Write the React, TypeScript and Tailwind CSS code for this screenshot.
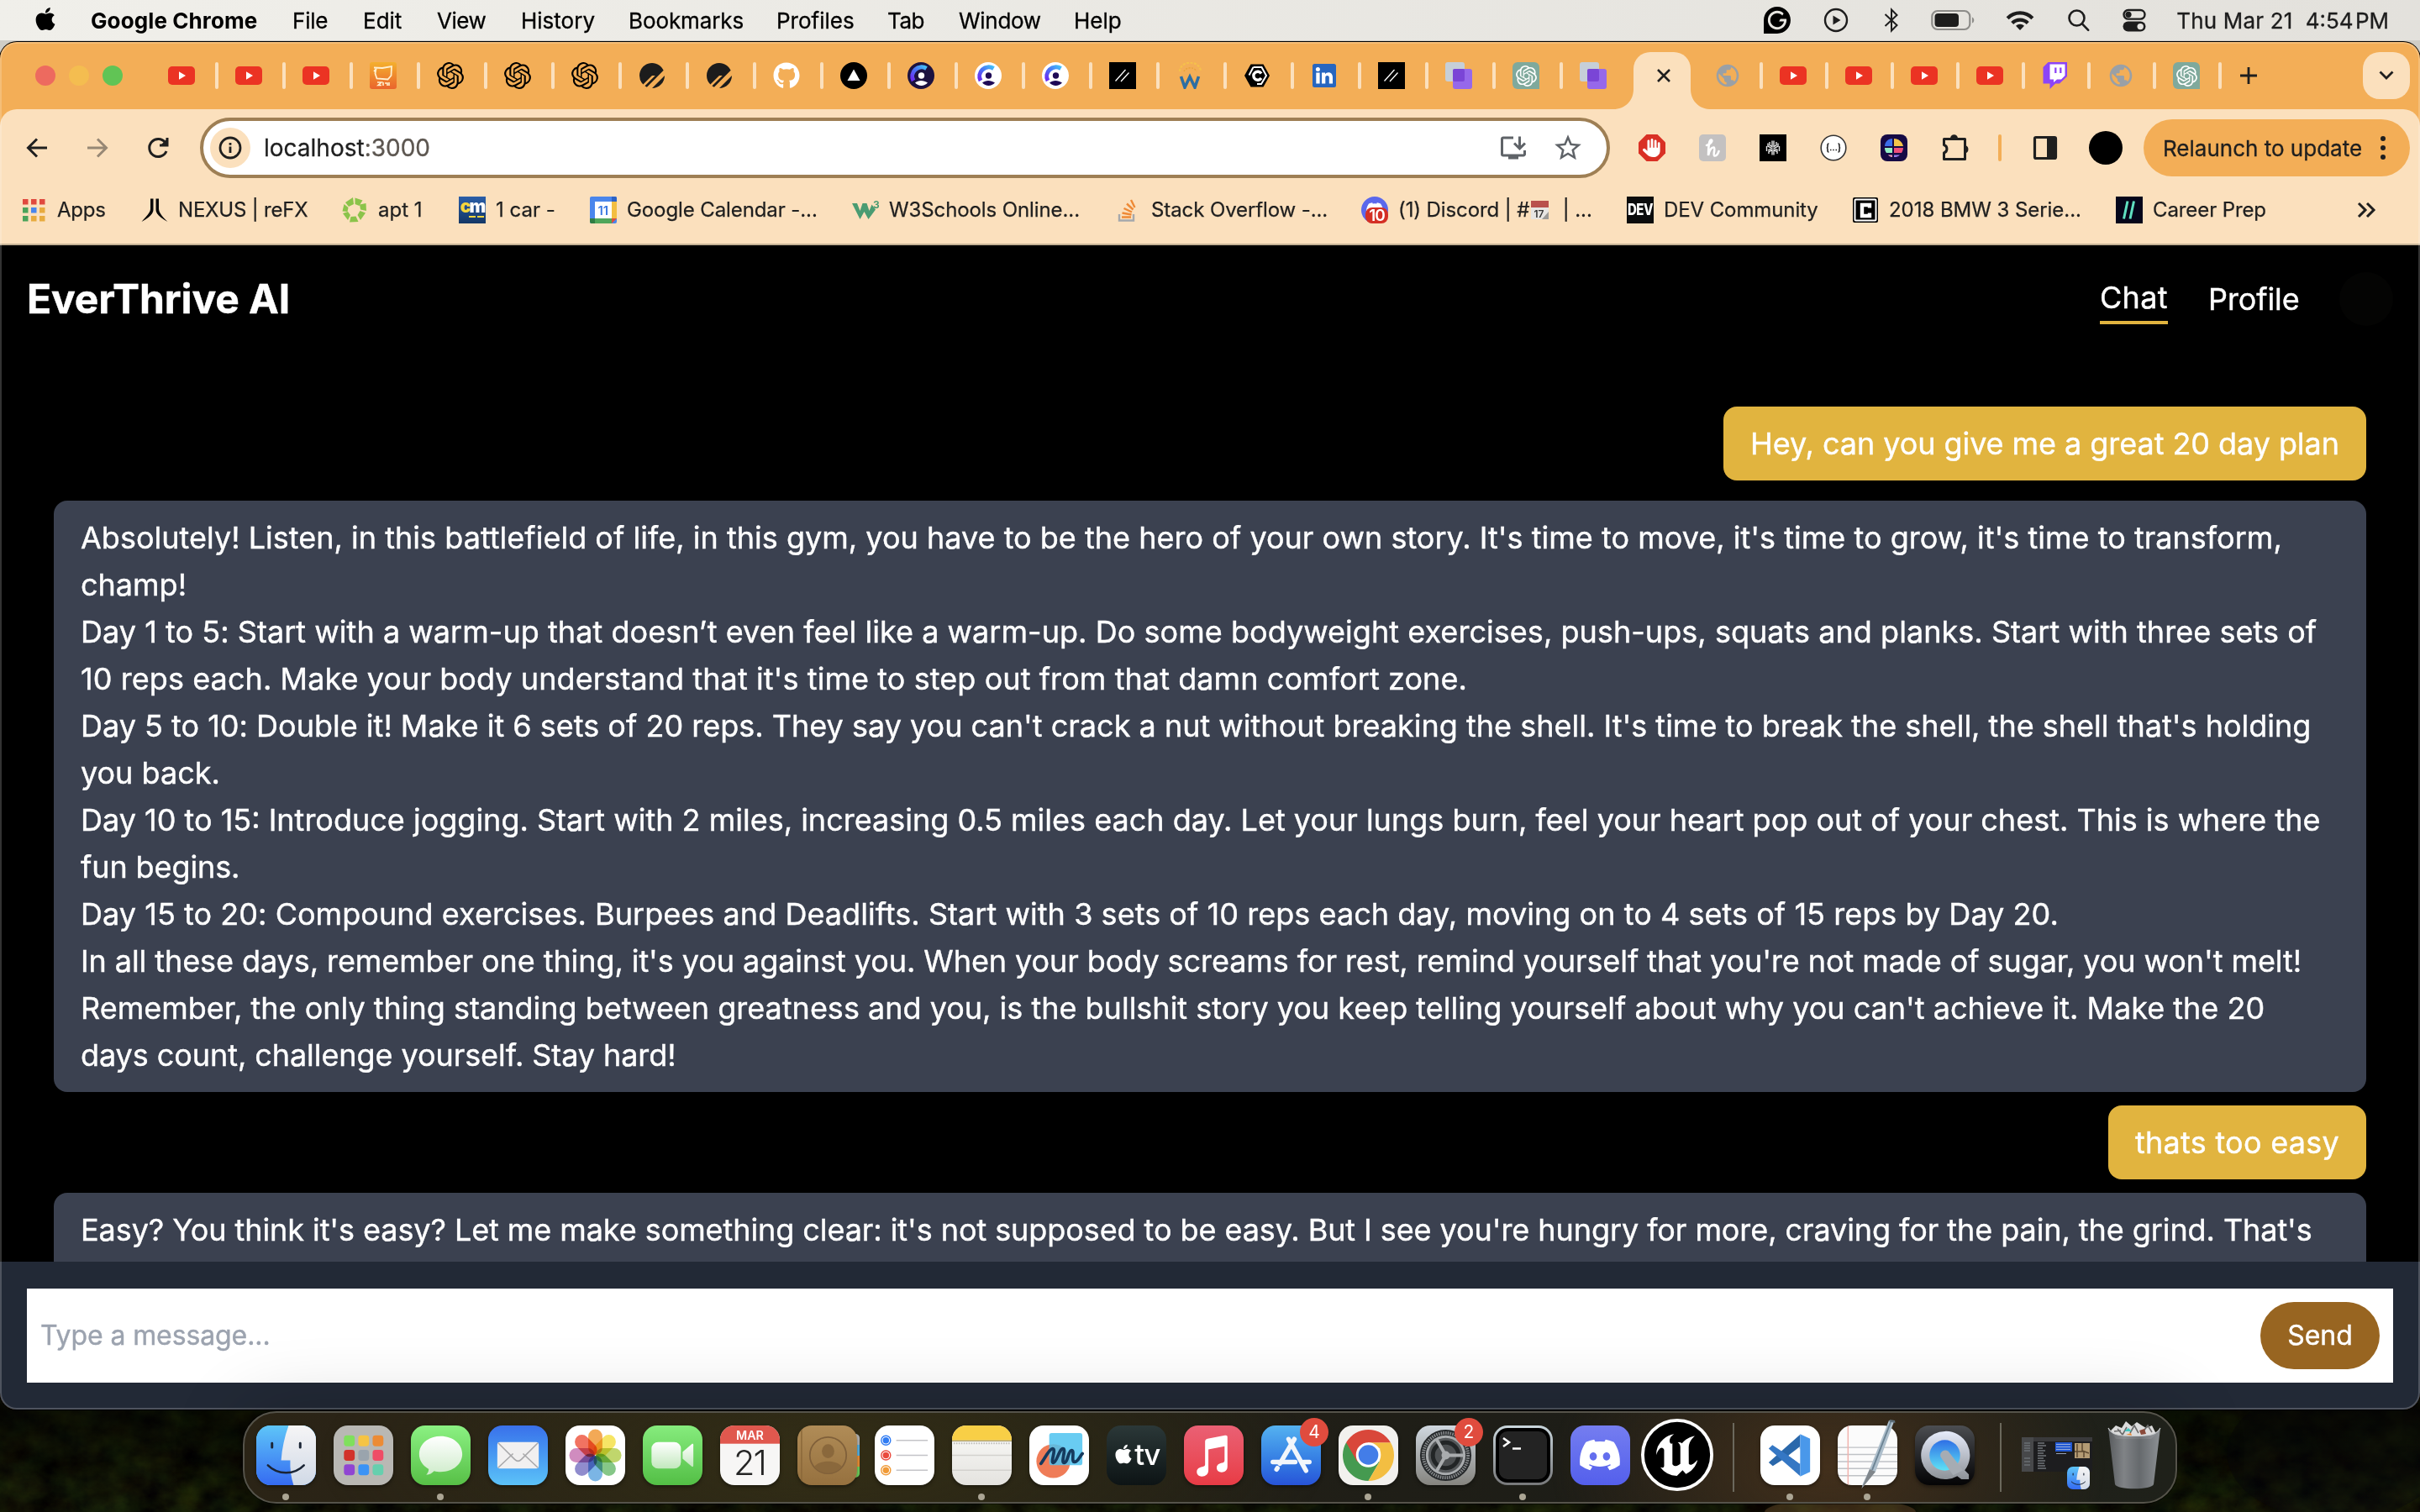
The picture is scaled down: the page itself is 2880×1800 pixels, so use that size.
import type { ReactNode } from 'react';
import { SiOpenai, SiUnrealengine, SiGrammarly, SiPlanetscale } from 'react-icons/si';
import { FaApple, FaGithub, FaHand, FaDiscord } from 'react-icons/fa6';
import { MdOutlineInstallDesktop, MdPublic, MdStarBorder } from 'react-icons/md';

/* ---------- menu bar ---------- */

const menus = [
  { label: 'File', cls: 'w-[84px] tracking-[-0.2px]' },
  { label: 'Edit', cls: 'w-[88px]' },
  { label: 'View', cls: 'w-[100px] tracking-[-0.5px]' },
  { label: 'History', cls: 'w-[128px]' },
  { label: 'Bookmarks', cls: 'w-[176px] tracking-[-0.1px]' },
  { label: 'Profiles', cls: 'w-[132px]' },
  { label: 'Tab', cls: 'w-[85px] tracking-[-0.5px]' },
  { label: 'Window', cls: 'w-[137px] tracking-[-0.3px]' },
  { label: 'Help', cls: 'w-[80px]' },
];

function MenuBar() {
  return (
    <header className="flex h-[48px] w-full shrink-0 items-center bg-linear-to-r from-[#f0efea] to-[#e3e1dc] text-[26px] text-black [-webkit-text-stroke:0.3px]">
      <FaApple className="ml-[38px] mb-[3px] h-[31px] w-[32px]" />
      <span className="ml-[38px] w-[240px] whitespace-nowrap font-bold tracking-[0.1px] [-webkit-text-stroke:0]">Google Chrome</span>
      {menus.map((m) => (
        <span key={m.label} className={`shrink-0 whitespace-nowrap ${m.cls}`}>{m.label}</span>
      ))}
      <div className="ml-auto flex items-center text-[#1d1d1d]">
        <SiGrammarly className="size-[32px] text-black" />
        <svg viewBox="0 0 30 30" className="ml-[39px] size-[30px]" fill="none" stroke="currentColor" strokeWidth="2.4">
          <circle cx="15" cy="15" r="13" />
          <path d="M11.5 9.5v11l9-5.5z" fill="currentColor" stroke="none" />
        </svg>
        <svg viewBox="0 0 20 30" className="ml-[41px] h-[30px] w-[20px]" fill="none" stroke="currentColor" strokeWidth="2">
          <path d="M2.5 8 L16.5 21 L10 27.5 V2.5 L16.5 9 L2.5 22" />
        </svg>
        <svg viewBox="0 0 54 26" className="ml-[37px] h-[26px] w-[54px]">
          <rect x="1.3" y="2" width="45" height="22" rx="6.5" fill="none" stroke="#8d8c89" strokeWidth="2.2" />
          <rect x="4.5" y="5" width="28.5" height="16" rx="4" fill="currentColor" />
          <path d="M49 9.5c3 1 3 6 0 7z" fill="#8d8c89" />
        </svg>
        <svg viewBox="0 0 36 28" className="ml-[34px] h-[26px] w-[36px]" fill="none" stroke="currentColor" strokeWidth="4.6">
          <path d="M2 11.5a22.5 22.5 0 0 1 32 0" />
          <path d="M8 17.8a14 14 0 0 1 20 0" />
          <path d="M18 27l-5.4-5.6a7.6 7.6 0 0 1 10.8 0z" fill="currentColor" stroke="none" />
        </svg>
        <svg viewBox="0 0 28 28" className="ml-[38px] size-[28px]" fill="none" stroke="currentColor" strokeWidth="2.6" strokeLinecap="round">
          <circle cx="11.5" cy="11.5" r="9" />
          <path d="M18.2 18.6l7 7.2" />
        </svg>
        <svg viewBox="0 0 28 28" className="ml-[38px] size-[28px]">
          <rect x="1.5" y="2" width="25" height="10.6" rx="5.3" fill="none" stroke="currentColor" strokeWidth="2.4" />
          <circle cx="7" cy="7.3" r="3.6" fill="currentColor" />
          <rect x="0.5" y="15.6" width="27" height="12" rx="6" fill="currentColor" />
          <circle cx="21.2" cy="21.6" r="3.7" fill="#e6e4e0" />
        </svg>
        <span className="ml-[36px] whitespace-pre tracking-[0.2px]">Thu Mar 21</span>
        <span className="ml-[15px] mr-[37px] whitespace-pre">4:54{'\u200A'}PM</span>
      </div>
    </header>
  );
}

/* ---------- favicons ---------- */

const YouTube = () => (
  <svg viewBox="0 0 32 32" className="size-8">
    <rect x="0" y="5" width="32" height="22" rx="5" fill="#eb3323" />
    <path d="M13 11.2v9.6l8-4.8z" fill="#fff" />
  </svg>
);
const Food = () => (
  <svg viewBox="0 0 32 32" className="size-8">
    <defs>
      <linearGradient id="food" x1="0" y1="0" x2="0" y2="1"><stop offset="0" stopColor="#f4b02e" /><stop offset="1" stopColor="#ea632c" /></linearGradient>
    </defs>
    <rect width="32" height="32" rx="3" fill="url(#food)" />
    <path d="M5 6.500l10 .5 11-2-.5 11-4 4.500-13-1-2-6 1-6M8 8l-3 3" fill="none" stroke="#fff0cf" strokeWidth="1.800" />
    <path d="M9 24h5l-4 3.500h4M16 24v4M18 25h3v3M23 24v4" fill="none" stroke="#fff0cf" strokeWidth="1.600" />
  </svg>
);
const OpenAi = () => <SiOpenai className="size-8 text-black" />;
const Planet = () => <SiPlanetscale className="size-[30px] text-[#1c1c1c]" />;
const GitHub = () => <FaGithub className="size-8 text-white" />;
const Vercel = () => (
  <svg viewBox="0 0 32 32" className="size-8"><circle cx="16" cy="16" r="16" fill="#000" /><path d="M16 8.500l7.500 13.500h-15z" fill="#fff" /></svg>
);
const Clerk = ({ dark = false }: { dark?: boolean }) => (
  <svg viewBox="0 0 32 32" className="size-8">
    <defs>
      <linearGradient id="clerk" x1="1" y1="0" x2="0.1" y2="1"><stop offset="0" stopColor="#43c0f7" /><stop offset=".5" stopColor="#4a72f5" /><stop offset="1" stopColor="#6c2cf2" /></linearGradient>
    </defs>
    <circle cx="16" cy="16" r="16" fill={dark ? '#1c1240' : '#fff'} />
    <path d="M22.500 7.500A11 11 0 0 0 7 22" fill="none" stroke="url(#clerk)" strokeWidth="5" />
    <circle cx="16.500" cy="16" r="3.700" fill={dark ? '#fff' : '#1f0a56'} />
    <path d="M9 24.500c4-3.500 10-3.500 15 0-4 4.500-11 4.500-15 0z" fill={dark ? '#fff' : '#1f0a56'} />
  </svg>
);
const Slashes = () => (
  <svg viewBox="0 0 32 32" className="size-8"><rect width="32" height="32" fill="#000" /><path d="M7.500 22.500L19.500 9M14 23l9.500-10.500" stroke="#fff" strokeWidth="1.300" /></svg>
);
const WArc = () => (
  <svg viewBox="0 0 32 32" className="size-8" fill="none">
    <path d="M4 11a12.500 10.500 0 0 1 25 0" stroke="#f5c14b" strokeWidth="2.200" strokeDasharray="3 1.500" />
    <path d="M9 11a8 6.500 0 0 1 15 0" stroke="#e8a33a" strokeWidth="1.500" strokeDasharray="2 1.500" />
    <path d="M5.500 17l4.500 13 6-12.500L22 30l4.500-13" stroke="#2d6ea3" strokeWidth="3.600" />
  </svg>
);
const HexC = () => (
  <svg viewBox="0 0 32 32" className="size-8">
    <path d="M8.500 2.500h15L31 16l-7.500 13.500h-15L1 16z" fill="#000" />
    <path d="M11.500 6h10l5.500 10-6 10h-5" fill="none" stroke="#fff" strokeWidth="2" />
    <path d="M21 13.500a5 5 0 1 0 0 5.500" fill="none" stroke="#fff" strokeWidth="3.400" />
    <path d="M11.500 6L6.500 15.500" stroke="#fff" strokeWidth="2" />
  </svg>
);
const LinkedIn = () => (
  <svg viewBox="0 0 32 32" className="size-8">
    <rect x="2" y="2" width="28" height="28" rx="2.500" fill="#2766c0" />
    <g fill="#fff"><circle cx="8.400" cy="8.500" r="2.500" /><rect x="6.300" y="12.500" width="4.300" height="13" />
      <path d="M13 12.500h4v1.800c2-3.300 9-3 9 3.700v7.500h-4.200v-7c0-3.200-4.500-3.200-4.500 0v7H13z" /></g>
  </svg>
);
const Squares = () => (
  <svg viewBox="0 0 32 32" className="size-8">
    <rect width="23" height="23" rx="3" fill="#c6cfd8" />
    <rect x="9" y="8" width="23" height="24" rx="3" fill="#9668ea" />
    <rect x="9" y="8" width="14" height="15" rx="2" fill="#7a45d6" />
  </svg>
);
const ChatGpt = () => (
  <span className="flex size-8 items-center justify-center rounded-l-md rounded-tr-md bg-[#7fa99c]"><SiOpenai className="size-[25px] text-white" /></span>
);
const Globe = () => <MdPublic className="size-[34px] text-[#9aa0a6]" />;
const Twitch = () => (
  <svg viewBox="0 0 32 32" className="size-8">
    <path d="M7.500 0H30v17L21 25.500h-5L9.500 32v-6.500H1.500V6z" fill="#8d44f7" />
    <path d="M9.500 2.500H27.500v13.500l-4.500 4.500h-5l-4 3.500v-3.500h-4.500z" fill="#fff" />
    <path d="M16.300 6.500v6.500M22.300 6.500v6.500" stroke="#8d44f7" strokeWidth="2.300" />
  </svg>
);

const leftTabs: ReactNode[] = [
  <YouTube />, <YouTube />, <YouTube />, <Food />, <OpenAi />, <OpenAi />, <OpenAi />, <Planet />, <Planet />, <GitHub />,
  <Vercel />, <Clerk dark />, <Clerk />, <Clerk />, <Slashes />, <WArc />, <HexC />, <LinkedIn />, <Slashes />, <Squares />, <ChatGpt />, <Squares />,
];
const rightTabs: ReactNode[] = [<Globe />, <YouTube />, <YouTube />, <YouTube />, <YouTube />, <Twitch />, <Globe />, <ChatGpt />];

function TabStrip() {
  return (
    <div className="flex h-[80px] shrink-0 items-center">
      <div className="ml-[42px] mr-[54px] flex gap-4">
        <span className="size-6 rounded-full bg-[#ed6a5f]" />
        <span className="size-6 rounded-full bg-[#f4bd50]" />
        <span className="size-6 rounded-full bg-[#61c455]" />
      </div>
      {leftTabs.map((icon, i) => (
        <div key={i} className={i === leftTabs.length - 1 ? 'flex w-[64px] shrink-0 items-center' : 'flex w-[80px] shrink-0 items-center'}>
          <span className="flex w-8 shrink-0 items-center justify-center">{icon}</span>
          {i < leftTabs.length - 1 && <span className="ml-6 h-8 w-1 rounded-full bg-[#fbe0bd]" />}
        </div>
      ))}
      <div className="relative mr-[28px] flex h-[68px] w-[68px] shrink-0 items-center justify-center self-end rounded-t-[20px] bg-[#fbe0bd]">
        <svg viewBox="0 0 24 24" className="absolute -left-6 bottom-0 size-6"><path d="M24 0v24H0C14 24 24 14 24 0z" fill="#fbe0bd" /></svg>
        <svg viewBox="0 0 24 24" className="absolute -right-6 bottom-0 size-6"><path d="M0 0v24h24C10 24 0 14 0 0z" fill="#fbe0bd" /></svg>
        <svg viewBox="0 0 16 16" className="mb-[12px] ml-[4px] size-4" stroke="#1f1f1f" strokeWidth="2.600"><path d="M1 1l14 14M15 1L1 15" /></svg>
      </div>
      {rightTabs.map((icon, i) => (
        <div key={i} className="flex w-[78px] shrink-0 items-center">
          <span className="flex w-8 shrink-0 items-center justify-center">{icon}</span>
          <span className="ml-[22px] h-8 w-1 rounded-full bg-[#fbe0bd]" />
        </div>
      ))}
      <svg viewBox="0 0 22 22" className="ml-[1px] size-[22px]" stroke="#1f1f1f" strokeWidth="2.800"><path d="M11 1v20M1 11h20" /></svg>
      <span className="ml-auto mr-[12px] flex size-[56px] items-center justify-center rounded-[20px] bg-[#fbe0bd]">
        <svg viewBox="0 0 18 12" className="h-[12px] w-[18px]" fill="none" stroke="#1f1f1f" strokeWidth="2.800"><path d="M1.500 1.500L9 9l7.500-7.500" /></svg>
      </span>
    </div>
  );
}

/* ---------- toolbar ---------- */

function Toolbar() {
  return (
    <div className="flex h-[92px] shrink-0 items-center text-[#1f1f1f] [-webkit-text-stroke:0.3px]">
      <svg viewBox="0 0 32 32" className="ml-[28px] size-8" fill="none" stroke="currentColor" strokeWidth="3"><path d="M28 16H6M16 5.500L5.500 16 16 26.500" /></svg>
      <svg viewBox="0 0 32 32" className="ml-[40px] size-8 opacity-45" fill="none" stroke="currentColor" strokeWidth="3"><path d="M4 16h22M16 5.500L26.500 16 16 26.500" /></svg>
      <svg viewBox="0 0 32 32" className="ml-[40px] size-8" fill="none" stroke="currentColor" strokeWidth="3">
        <path d="M26 20a10.500 10.500 0 1 1-1.500-10.500M27 4v9h-9" />
        <path d="M27 5v8h-8z" fill="currentColor" stroke="none" />
      </svg>
      <div className="ml-[34px] flex h-[72px] w-[1678px] shrink-0 items-center rounded-full border-4 border-[#9e7f54] bg-white pl-[8px] pr-[30px]">
        <span className="flex size-12 items-center justify-center rounded-full bg-[#fbe0bd]">
          <svg viewBox="0 0 28 28" className="size-7"><circle cx="14" cy="14" r="12" fill="none" stroke="#1f1f1f" strokeWidth="2.800" /><path d="M14 12.500v7.500M14 8v2.800" stroke="#1f1f1f" strokeWidth="2.800" /></svg>
        </span>
        <span className="ml-[16px] text-[28px]">localhost<span className="text-[#5c5650]">:3000</span></span>
        <MdOutlineInstallDesktop className="ml-auto size-[36px] text-[#5f6368]" />
        <MdStarBorder className="ml-[28px] -mr-[3px] size-[38px] text-[#5f6368]" />
      </div>
      <div className="ml-[34px] flex items-center gap-[40px]">
        <span className="relative flex size-8 items-center justify-center">
          <svg viewBox="0 0 32 32" className="absolute inset-0 size-8"><path d="M9.500 0h13L32 9.500v13L22.500 32h-13L0 22.500v-13z" fill="#d93025" /></svg>
          <FaHand className="relative size-[22px] text-white" />
        </span>
        <span className="flex size-8 items-center justify-center rounded-[5px] bg-[#c3c1c1]">
          <svg viewBox="0 0 32 32" className="size-8" fill="none" stroke="#fff" strokeWidth="2.600" strokeLinecap="round">
            <path d="M9 13c5-1 8-6 5.500-6.500S11 15 11 25c1-6 4-10 6.500-9.500S16 25 18.500 25.500 23 22 23.500 20" />
          </svg>
        </span>
        <svg viewBox="0 0 32 32" className="size-8">
          <rect width="32" height="32" fill="#000" />
          <g fill="none" stroke="#e6e6e6" strokeWidth="1.400">
            <path d="M15 7.500v7l-3-1.600V9M17 7.500v7l3-1.600V9M10 10.500v3.500l4.500 2.500L10 19M22 10.500v3.500l-4.500 2.500L22 19M8.500 14v6M23.500 14v6M15 24.500v-6l-4 2v2.500M17 24.500v-6l4 2v2.500" />
          </g>
        </svg>
        <svg viewBox="0 0 32 32" className="size-8">
          <circle cx="16" cy="16" r="14.800" fill="#fff" stroke="#333" strokeWidth="1.600" />
          <path d="M10.500 11c-3 0 0 4.500-2.500 5 2.500.5-.5 5 2.500 5M21.500 11c3 0 0 4.500 2.500 5-2.500.5.5 5-2.500 5" fill="none" stroke="#222" strokeWidth="1.600" />
          <path d="M12 18.500h1.500M15.200 18.500h1.500M18.500 18.500H20" stroke="#222" strokeWidth="1.600" />
        </svg>
        <svg viewBox="0 0 32 32" className="size-8">
          <rect width="32" height="32" rx="8" fill="#160a45" />
          <path d="M14 5v9H5c0-5 4-9 9-9z" fill="#3c6ee8" /><path d="M16 5c5.500 0 10 4 11 9H16z" fill="#f3c44a" />
          <path d="M5 16h9v6H7c-1.500-2-2-4-2-6z" fill="#95f0c4" /><path d="M16 16h11c0 2-.8 4-2 6h-9z" fill="#ee4e7b" />
          <path d="M9 24.500h5V27c-2 0-4-1-5-2.500z" fill="#f5a5c0" /><path d="M16 24.500h7c-2 2-4 2.500-7 2.500z" fill="#9a7bf0" />
        </svg>
        <svg viewBox="0 0 36 36" className="-mr-[4px] mb-[2px] size-9">
          <path d="M3.500 8.500h25v24h-25v-7.500a5 5 0 0 0 0-9.500z" fill="none" stroke="currentColor" strokeWidth="3" strokeLinejoin="round" />
          <path d="M11 8a4.500 4.800 0 0 1 9 0zM29 16a5 5 0 0 1 0 9.500z" fill="currentColor" />
        </svg>
      </div>
      <span className="ml-[36px] h-8 w-1 rounded-full bg-[#f3ae57]" />
      <svg viewBox="0 0 32 32" className="ml-[36px] size-8"><rect x="3.500" y="3.500" width="25" height="25" rx="1.500" fill="none" stroke="currentColor" strokeWidth="3.200" /><path d="M18 3h10v26H18z" fill="currentColor" /></svg>
      <span className="ml-[36px] size-10 shrink-0 rounded-full bg-black" />
      <div className="ml-[25px] flex h-[68px] w-[317px] shrink-0 items-center rounded-full bg-[#f3ae57] pl-[23px]">
        <span className="whitespace-nowrap text-[26px]">Relaunch to update</span>
        <span className="ml-[22px] flex flex-col gap-[5px]">
          <span className="size-[6px] rounded-full bg-[#1f1f1f]" /><span className="size-[6px] rounded-full bg-[#1f1f1f]" /><span className="size-[6px] rounded-full bg-[#1f1f1f]" />
        </span>
      </div>
    </div>
  );
}

/* ---------- bookmarks ---------- */

const AppsGrid = () => (
  <svg viewBox="0 0 32 32" className="size-8">
    {[['#e0493e', '#e0493e', '#e0493e'], ['#4aa35a', '#4a86ec', '#e8ab3e'], ['#4aa35a', '#e8ab3e', '#e8ab3e']].map((row, y) =>
      row.map((c, x) => <rect key={`${x}${y}`} x={3 + x * 10} y={3 + y * 10} width="6.500" height="6.500" fill={c} />))}
  </svg>
);
const Nexus = () => (
  <svg viewBox="0 0 32 32" className="size-8" fill="#0a0a0a"><path d="M11 2.500h3.500v13c0 5-5 9.500-14 14.500 5-6 10.500-10.500 10.500-15.500zM17.500 2.500H21v12c0 5 5 10 10.500 15.500-9-5-14-9.500-14-14.500z" /></svg>
);
const Apt = () => (
  <svg viewBox="0 0 32 32" className="size-8" fill="#8bc34a">
    <path d="M14 1l1 8-6 3-4-5z" /><path d="M16.500 1.500l9 3-4 6.500-5-2z" /><path d="M29.500 8L30 17l-7-1.500-1-6z" /><path d="M29 19.500L23 28l-3.500-6 3-5z" /><path d="M20.500 30l-10.500.5 1.500-6.500 6-.5z" /><path d="M8 28l-6-8 6-2 3 4z" /><path d="M1.500 17.500L3.500 9l5 4-1 5z" />
  </svg>
);
const Cm = () => (
  <span className="flex size-8 flex-col items-center bg-linear-to-b from-[#2a5ea8] to-[#143766] pt-[2px]">
    <span className="text-[21px] font-black leading-[20px] tracking-[-2px] text-white"><span className="text-[#f5d63d]">c</span>m</span>
    <span className="mt-[1px] flex gap-[2px] self-end pr-[2px]"><span className="h-[2px] w-2 bg-[#f5d63d]" /><span className="h-[2px] w-2 bg-[#f5d63d]" /></span>
  </span>
);
const GCal = () => (
  <svg viewBox="0 0 32 32" className="size-8">
    <rect width="32" height="32" rx="2" fill="#4a86ec" /><path d="M26 0h4a2 2 0 0 1 2 2v4h-6z" fill="#2c62c6" />
    <path d="M26 6h6v20h-6z" fill="#f3be42" /><path d="M6 26h20v6H6z" fill="#4fa65a" /><path d="M0 26h6v6H2a2 2 0 0 1-2-2z" fill="#2f7d43" /><path d="M26 26h6l-6 6z" fill="#dd4b3e" />
    <rect x="6" y="6" width="20" height="20" fill="#fff" />
    <text x="15.800" y="21.500" textAnchor="middle" fontSize="15" fontWeight="600" fill="#3b78e0">11</text>
  </svg>
);
const W3 = () => (
  <svg viewBox="0 0 32 32" className="size-8">
    <path d="M0 8h6l3.500 9 3-9h5l3 9 3-7.500 4.500 6L19.500 27l-5-9-5 9z" fill="#4a9c72" />
    <text x="25" y="14" fontSize="12" fontWeight="700" fill="#4a9c72">3</text>
  </svg>
);
const Stack = () => (
  <svg viewBox="0 0 32 32" className="size-8" fill="none">
    <path d="M6 21v7.500h17V21" stroke="#a5a8ac" strokeWidth="2.400" />
    <path d="M9 24.500h11M9.500 19.500l11 2M11.500 14l9.500 4.500M15 8.500l7.500 7M20 4l4.500 9" stroke="#ee8a36" strokeWidth="2.400" />
  </svg>
);
const DiscordBadge = () => (
  <span className="relative size-8 rounded-full bg-[#5b68ec]">
    <FaDiscord className="absolute left-[5px] top-[4px] size-[22px] text-white" />
    <span className="absolute bottom-0 left-[5px] flex h-[19px] w-[27px] items-center justify-center rounded-[8px] bg-[#d42f24] text-[19px] font-semibold leading-none tracking-[-1px] text-white">10</span>
  </span>
);
const CalEmoji = () => (
  <svg viewBox="0 0 24 24" className="mx-[1px] h-6 w-6">
    <rect x="1" y="1" width="21" height="22" fill="#e7e5e2" /><rect x="1" y="1" width="21" height="8" fill="#b9504c" />
    <text x="10.500" y="20.500" textAnchor="middle" fontSize="12" fontWeight="600" fill="#333">17</text>
    <path d="M22 14v9h-8z" fill="#9c9a97" />
  </svg>
);
const Dev = () => <span className="flex size-8 items-center justify-center overflow-hidden bg-[#0b0c0d] text-[15px] font-extrabold tracking-[-0.5px] text-white"><span className="scale-y-125">DEV</span></span>;
const CarC = () => (
  <svg viewBox="0 0 32 32" className="size-8">
    <rect x="1" y="1" width="30" height="30" rx="2" fill="#000" /><rect x="3.500" y="3.500" width="25" height="25" rx="1" fill="none" stroke="#fff" strokeWidth="2" />
    <path d="M21 13.500V10h-9v13h9v-3.500" fill="none" stroke="#fff" strokeWidth="4.400" />
  </svg>
);
const Career = () => (
  <svg viewBox="0 0 32 32" className="size-8"><rect width="32" height="32" fill="#05061a" /><path d="M9.500 26.500l4.500-21M17 26.500l4.500-21" stroke="#5fe0c0" strokeWidth="3" /></svg>
);

const bookmarks: { icon: ReactNode; label: ReactNode; cls: string }[] = [
  { icon: <AppsGrid />, label: 'Apps', cls: 'w-[144px] tracking-[-0.2px]' },
  { icon: <Nexus />, label: 'NEXUS | reFX', cls: 'w-[238px] tracking-[-0.2px]' },
  { icon: <Apt />, label: 'apt 1', cls: 'w-[140px]' },
  { icon: <Cm />, label: '1 car -', cls: 'w-[156px]' },
  { icon: <GCal />, label: 'Google Calendar -...', cls: 'w-[312px] tracking-[-0.1px]' },
  { icon: <W3 />, label: 'W3Schools Online...', cls: 'w-[312px] tracking-[-0.1px]' },
  { icon: <Stack />, label: 'Stack Overflow -...', cls: 'w-[294px] tracking-[-0.1px]' },
  { icon: <DiscordBadge />, label: <span className="flex items-center whitespace-pre">(1) Discord | #<CalEmoji />{'  | ...'}</span>, cls: 'w-[316px] tracking-[-0.1px]' },
  { icon: <Dev />, label: 'DEV Community', cls: 'w-[268px] tracking-[-0.1px]' },
  { icon: <CarC />, label: '2018 BMW 3 Serie...', cls: 'w-[314px] tracking-[-0.05px]' },
  { icon: <Career />, label: 'Career Prep', cls: 'w-[270px] tracking-[-0.1px]' },
];

function Bookmarks() {
  return (
    <div className="flex h-[70px] shrink-0 items-start border-b-2 border-[#c4b195] pl-[24px] pt-[10px] text-[24px] text-[#1f1f1f] [-webkit-text-stroke:0.25px]">
      {bookmarks.map((b, i) => (
        <div key={i} className={`flex h-[36px] shrink-0 items-center whitespace-nowrap ${b.cls}`}>
          <span className="flex size-8 shrink-0 [-webkit-text-stroke:0]">{b.icon}</span>
          <span className="ml-[12px]">{b.label}</span>
        </div>
      ))}
      <svg viewBox="0 0 24 20" className="ml-[17px] mt-[8px] h-[20px] w-[24px]" fill="none" stroke="currentColor" strokeWidth="3"><path d="M2 2l8 8-8 8M12 2l8 8-8 8" /></svg>
    </div>
  );
}

/* ---------- chat page ---------- */

const planLines: [string, string][] = [
  ["Absolutely! Listen, in this battlefield of life, in this gym, you have to be the hero of your own story. It's time to move, it's time to grow, it's time to transform,", 'tracking-[0.017px]'],
  ['champ!', ''],
  ['Day 1 to 5: Start with a warm-up that doesn’t even feel like a warm-up. Do some bodyweight exercises, push-ups, squats and planks. Start with three sets of', 'tracking-[0.042px]'],
  ["10 reps each. Make your body understand that it's time to step out from that damn comfort zone.", 'tracking-[0.077px]'],
  ["Day 5 to 10: Double it! Make it 6 sets of 20 reps. They say you can't crack a nut without breaking the shell. It's time to break the shell, the shell that's holding", 'tracking-[0.006px]'],
  ['you back.', ''],
  ['Day 10 to 15: Introduce jogging. Start with 2 miles, increasing 0.5 miles each day. Let your lungs burn, feel your heart pop out of your chest. This is where the', ''],
  ['fun begins.', 'tracking-[-0.1px]'],
  ['Day 15 to 20: Compound exercises. Burpees and Deadlifts. Start with 3 sets of 10 reps each day, moving on to 4 sets of 15 reps by Day 20.', 'tracking-[0.047px]'],
  ["In all these days, remember one thing, it's you against you. When your body screams for rest, remind yourself that you're not made of sugar, you won't melt!", 'tracking-[-0.077px]'],
  ["Remember, the only thing standing between greatness and you, is the bullshit story you keep telling yourself about why you can't achieve it. Make the 20", ''],
  ['days count, challenge yourself. Stay hard!', 'tracking-[-0.07px]'],
];

function ChatPage() {
  return (
    <div className="flex min-h-0 flex-1 flex-col bg-black text-[36px] leading-[56px] text-white [-webkit-text-stroke:0.4px]">
      <nav className="flex h-[128px] shrink-0 items-center px-8">
        <h1 className="text-[48px] font-bold leading-[64px] tracking-[-0.1px]">EverThrive AI</h1>
        <div className="ml-auto flex items-center gap-12">
          <a className="w-[81px] border-b-4 border-[#e1b43f] tracking-[0.3px]">Chat</a>
          <a className="w-[108px] tracking-[-0.1px]">Profile</a>
          <span className="size-16 rounded-full bg-[#040403]" />
        </div>
      </nav>
      <main className="flex min-h-0 flex-1 flex-col overflow-hidden px-16 pt-16">
        <div className="mb-6 flex h-[88px] w-[765px] shrink-0 items-center self-end rounded-2xl bg-[#e1b43f] px-8 whitespace-nowrap tracking-[-0.06px]">Hey, can you give me a great 20 day plan</div>
        <div className="mb-4 shrink-0 rounded-2xl bg-[#3b4150] px-8 py-4">
          {planLines.map(([text, cls]) => <p key={text} className={`whitespace-nowrap ${cls}`}>{text}</p>)}
        </div>
        <div className="mb-4 flex h-[88px] w-[307px] shrink-0 items-center self-end rounded-2xl bg-[#e1b43f] px-8 whitespace-nowrap tracking-[0.26px]">thats too easy</div>
        <div className="h-[200px] shrink-0 rounded-2xl bg-[#3b4150] px-8 py-4">
          <p className="whitespace-nowrap tracking-[-0.076px]">Easy? You think it's easy? Let me make something clear: it's not supposed to be easy. But I see you're hungry for more, craving for the pain, the grind. That's</p>
        </div>
      </main>
      <footer className="h-[176px] shrink-0 bg-[#222936] p-8 text-[32px]">
        <div className="flex h-[112px] items-center bg-white pl-4 pr-4">
          <span className="tracking-[-0.1px] text-[#9ca3af]">Type a message...</span>
          <button className="ml-auto flex h-20 w-[142px] items-center justify-center rounded-full bg-[#986521] tracking-[-0.1px] text-white">Send</button>
        </div>
      </footer>
    </div>
  );
}

/* ---------- dock ---------- */

function Tile({ children, cls }: { children?: ReactNode; cls: string }) {
  return <div className={`relative size-[71px] overflow-hidden rounded-[17px] shadow-[0_2px_4px_rgba(0,0,0,0.4)] ${cls}`}><svg viewBox="0 0 72 72" className="size-full">{children}</svg></div>;
}

const FinderFace = () => (
  <>
    <defs>
      <linearGradient id="fl" x1="0" y1="0" x2="0" y2="1"><stop offset="0" stopColor="#5ec5f8" /><stop offset="1" stopColor="#356bf2" /></linearGradient>
      <linearGradient id="fr" x1="0" y1="0" x2="0" y2="1"><stop offset="0" stopColor="#f6f5f6" /><stop offset="1" stopColor="#d0d9e6" /></linearGradient>
    </defs>
    <rect width="72" height="72" fill="url(#fl)" />
    <path d="M39 0C34 14 31 28 30 42h11c-.5 10 1 21 4 30h27V0z" fill="url(#fr)" />
    <path d="M19 21.500v5M53 21.500v5" stroke="#1b2535" strokeWidth="3" strokeLinecap="round" />
    <path d="M14 48c12 12 32 12 43.500 0" fill="none" stroke="#1b2535" strokeWidth="2.600" strokeLinecap="round" />
  </>
);
const Finder = () => <Tile cls="bg-[#5ec5f8]"><FinderFace /></Tile>;

const pad = ['#7fe05c', '#f6c444', '#ec8b35', '#d2322a', '#9aa4ad', '#ef4c66', '#9045d2', '#3b93f5', '#66cfae'];
const Launchpad = () => (
  <Tile cls="bg-[#b9b8b4]">{pad.map((c, i) => <rect key={c} x={12.5 + (i % 3) * 17.3} y={12 + Math.floor(i / 3) * 17.5} width="13" height="13" rx="3.500" fill={c} />)}</Tile>
);
const Messages = () => (
  <Tile cls="bg-linear-to-b from-[#8bf182] to-[#57c046]">
    <defs><linearGradient id="ms" x1="0" y1="0" x2="0" y2="1"><stop offset="0" stopColor="#fff" /><stop offset="1" stopColor="#cfeccb" /></linearGradient></defs>
    <path d="M36 13c15 0 26 9.500 26 21.500S51 56 36 56c-3 0-5.500-.3-8-1-3 3-6 4.500-9.500 4.500 2-2 3-4.500 3-7C14 48.500 10 42 10 34.500 10 22.500 21 13 36 13z" fill="url(#ms)" />
  </Tile>
);
const Mail = () => (
  <Tile cls="bg-linear-to-b from-[#3a70ea] to-[#5cc2f8]">
    <rect x="11" y="20" width="50" height="32" rx="3" fill="#f1f0f0" />
    <path d="M12 51l18-17M60 51L42 34M12 21l20 20c2.500 2.500 5.500 2.500 8 0l20-20" fill="none" stroke="#a9a9ab" strokeWidth="1.600" />
  </Tile>
);
const petals = ['#f19a38', '#f4e04a', '#b5cf52', '#71bd73', '#64a8e0', '#7c78c4', '#c878b4', '#ee5a45'];
const Photos = () => (
  <Tile cls="bg-white">{petals.map((c, i) => <rect key={c} x="27.500" y="4.500" width="17" height="31" rx="8.500" fill={c} fillOpacity=".85" className="mix-blend-multiply" transform={`rotate(${i * 45} 36 36)`} />)}</Tile>
);
const FaceTime = () => (
  <Tile cls="bg-linear-to-b from-[#86ec7d] to-[#53bf45]">
    <defs><linearGradient id="ft" x1="0" y1="0" x2="0" y2="1"><stop offset="0" stopColor="#fff" /><stop offset="1" stopColor="#c2e8bd" /></linearGradient></defs>
    <rect x="10.500" y="20" width="35.500" height="32" rx="8" fill="url(#ft)" /><path d="M48 32l11-9.500c1-.7 2-.3 2 1v25c0 1.300-1 1.700-2 1L48 40z" fill="url(#ft)" />
  </Tile>
);
const Calendar = () => (
  <Tile cls="bg-[#f7f6f5]">
    <rect width="72" height="22" fill="#e0584e" />
    <text x="36" y="17.500" textAnchor="middle" fontSize="14.500" fontWeight="600" fill="#fff">MAR</text>
    <text x="35.500" y="60" textAnchor="middle" fontSize="42" fontWeight="300" letterSpacing="-2" fill="#252525">21</text>
  </Tile>
);
const Contacts = () => (
  <div className="relative">
    <div className="absolute -right-[3px] top-[10px] flex h-[52px] w-[10px] flex-col overflow-hidden rounded-r-[5px]"><span className="flex-1 bg-[#b5b5b5]" /><span className="flex-1 bg-[#56b4e6]" /><span className="flex-1 bg-[#ef9136]" /><span className="flex-1 bg-[#6fd35d]" /></div>
    <Tile cls="bg-linear-to-b from-[#b08c57] to-[#96713f]">
      <path d="M5 0v72" stroke="#8a6839" strokeWidth="1.500" />
      <circle cx="37" cy="36" r="22" fill="none" stroke="#80603a" strokeWidth="1.800" /><ellipse cx="37" cy="31" rx="7.500" ry="8.500" fill="#8a683c" /><path d="M20.500 50c5-9 28-9 33 0-8 10-25 10-33 0z" fill="#8a683c" />
    </Tile>
  </div>
);
const Reminders = () => (
  <Tile cls="bg-white">
    {['#2f7bf3', '#ea4a3d', '#f09a37'].map((c, i) => (
      <g key={c}><circle cx="13.500" cy={18 + i * 18} r="5.600" fill="none" stroke={c} strokeWidth="1.400" /><circle cx="13.500" cy={18 + i * 18} r="3.800" fill={c} /><path d={`M26 ${18 + i * 18}h38`} stroke="#c4c4c8" strokeWidth="1.500" /></g>
    ))}
  </Tile>
);
const Notes = () => (
  <Tile cls="bg-linear-to-b from-[#fbfbf9] to-[#e4e3df]">
    <rect width="72" height="18" fill="#f8cf46" /><path d="M0 18.700h72" stroke="#a89a6a" strokeWidth="1.200" /><path d="M2 21.500h68" stroke="#bdbcb8" strokeWidth="2" strokeDasharray="1.500 1.500" /><path d="M0 36h72M0 54h72" stroke="#d3d2ce" strokeWidth="1.500" />
  </Tile>
);
const Freeform = () => (
  <Tile cls="bg-white">
    <circle cx="29" cy="43" r="20.500" fill="#ef7c57" />
    <rect x="24" y="9" width="40" height="39" rx="3" fill="#4fc3f0" fillOpacity=".85" />
    <path d="M14 46c4-5 10-18 14-18 5 0-3 17 1 17s7-17 11.500-17c4.500 0-3 17 1.500 17s5-15 9-15c4 0-1 14 3.500 14 4 0 6-6 9.500-10" fill="none" stroke="#153a5e" strokeWidth="3.800" strokeLinecap="round" />
  </Tile>
);
const Tv = () => (
  <div className="flex size-[71px] items-center justify-center rounded-[17px] bg-linear-to-b from-[#2b3838] to-[#0d1415] text-white">
    <FaApple className="mb-[3px] size-[26px] shrink-0" /><span className="mb-[1px] text-[35px] font-medium leading-none tracking-[-1.5px]">tv</span>
  </div>
);
const Music = () => (
  <Tile cls="bg-linear-to-b from-[#ea6074] to-[#e83b45]">
    <path d="M25.500 19.500c0-2 1-3 3-3.500l21-4c2-.4 3 .3 3 2v35.500c0 5-3.500 7-7 7s-6-2-6-5.500 3-5.500 6.500-6c2-.3 3-1 3-3V25l-19.500 4v25c0 5-3.500 7.500-8 7.500-3.500 0-6-2.300-6-5.500 0-3.500 3-5.500 6.500-6 2.500-.4 3.500-1 3.500-3z" fill="#fff" />
  </Tile>
);
const AppStore = () => (
  <Tile cls="bg-linear-to-b from-[#55b2f0] to-[#2853d8]">
    <g stroke="#f2f6fb" strokeWidth="5.600" strokeLinecap="round"><path d="M33 16.500l21 38M40 16.500L22.500 46M18.500 53l1-1.500M14 44h27M51 44h7" /></g>
  </Tile>
);
const Chrome = () => (
  <Tile cls="bg-[#f2f1ee]">
    <path d="M9.200 20.500A31 31 0 0 0 36 67l13.500-23.300L36 36z" fill="#459a50" /><path d="M62.800 20.500A31 31 0 0 1 36 67l13.500-23.300L50 28l-14-7.500z" fill="#f3be42" />
    <path d="M36 20.500h26.800A31 31 0 0 0 9.200 20.500l13.400 23.300z" fill="#d9473a" />
    <circle cx="36" cy="35.500" r="15" fill="#fff" /><circle cx="36" cy="35.500" r="12" fill="#437de8" />
  </Tile>
);
const Settings = () => (
  <Tile cls="bg-linear-to-b from-[#d0d8e0] to-[#85847f]">
    <circle cx="36" cy="36" r="31" fill="#25282a" /><circle cx="36" cy="36" r="27" fill="none" stroke="#85888a" strokeWidth="4" strokeDasharray="1.600 1.200" />
    <circle cx="36" cy="36" r="22.500" fill="#55585a" stroke="#a9acae" strokeWidth="3" />
    <circle cx="36" cy="36" r="15.500" fill="#4d5052" stroke="#222526" strokeWidth="5" />
    <path d="M36 36h23M36 36L24.500 16M36 36L24.500 56" stroke="#a9acae" strokeWidth="4" /><circle cx="36" cy="36" r="5" fill="#a9acae" />
  </Tile>
);
const Terminal = () => (
  <div className="size-[71px] rounded-[17px] bg-linear-to-b from-[#c9d6dc] to-[#77787a] p-[3px]">
    <div className="size-full rounded-[14px] border-4 border-black bg-[#232323]"><svg viewBox="0 0 57 57" className="size-full" fill="none" stroke="#fff" strokeWidth="2.600"><path d="M5 8l7 5-7 5M16 20.500h10" /></svg></div>
  </div>
);
const DiscordTile = () => (
  <div className="flex size-[71px] items-center justify-center rounded-[17px] bg-linear-to-b from-[#757df0] to-[#545fec] text-white"><FaDiscord className="size-[52px]" /></div>
);
const Unreal = () => (
  <div className="flex size-[86px] shrink-0 items-center justify-center rounded-full border-[3px] border-white bg-black"><SiUnrealengine className="size-[84px] scale-[1.02] text-white" /></div>
);
const VsCode = () => (
  <Tile cls="bg-white">
    <path d="M10 44.500L48 11v17L15 49z" fill="#2a68ab" /><path d="M10 28l4.500-4.500L48 46v15z" fill="#3577c4" />
    <path d="M48 10.500l12 5.500v40l-12 5.500z" fill="#4a98ea" />
    <path d="M47.500 25.500v21L34 36z" fill="#fff" />
  </Tile>
);
const TextEdit = () => (
  <div className="relative">
    <Tile cls="bg-[#fbfbfb]">
      {[26.5, 35, 43.5, 52, 60.5].map((y) => <path key={y} d={`M0 ${y}h72`} stroke="#bfc2c6" strokeWidth="1.500" />)}
      <path d="M12.500 0v72" stroke="#f1b3ae" strokeWidth="1.500" />
    </Tile>
    <svg viewBox="0 0 50 86" className="absolute left-[23px] -top-[9px] h-[86px] w-[50px]">
      <path d="M38 3l6 1.500L22 64 5.500 84 7 78l8-17z" fill="#aebfcc" /><path d="M40.500 4L18 62" stroke="#6d8494" strokeWidth="2" /><path d="M15 61l7 3L5.500 84z" fill="#80868b" /><path d="M39 2l6 1 .5 3-7-1.500z" fill="#5d6d79" />
    </svg>
  </div>
);
const QuickTime = () => (
  <Tile cls="bg-linear-to-b from-[#4c4e52] to-[#050506]">
    <defs>
      <linearGradient id="qr" x1="0" y1="0" x2="0" y2="1"><stop offset="0" stopColor="#e6ebfa" /><stop offset="1" stopColor="#8d9298" /></linearGradient>
      <linearGradient id="qb" x1="0" y1="0" x2="0" y2="1"><stop offset="0" stopColor="#2f6fe6" /><stop offset="1" stopColor="#5fe3f5" /></linearGradient>
    </defs>
    <path d="M36 7a29 29 0 1 0 15 54l5 4h9V59l-5-5A29 29 0 0 0 36 7z" fill="url(#qr)" /><circle cx="36" cy="36" r="18.500" fill="url(#qb)" />
    <path d="M31 38a6 6 0 0 1 9-7l18 23-12 6z" fill="#a6acb3" />
  </Tile>
);
const MiniWindow = () => (
  <div className="relative h-[60px] w-[84px]">
    <svg viewBox="0 0 84 42" className="mt-[9px] h-[42px] w-[84px]">
      <rect width="84" height="41" fill="#1d1d1f" /><rect width="14" height="41" fill="#47484a" /><rect x="14" width="70" height="5" fill="#39393b" />
      <path d="M3 7h7M3 10h7M3 13h7M3 16h7M3 25h7M3 29h7M3 33h7" stroke="#7c8288" strokeWidth="1" />
      <rect x="40" y="6" width="20" height="11" fill="#2259d4" /><path d="M41 8.500h17M41 11.500h17M41 14.500h17M41 19.500h12" stroke="#b4c2dd" strokeWidth=".8" />
      <path d="M19 7h8M19 10h10M19 13h6M19 16h9M19 19h7M19 22h10M19 25h7M19 28h9M19 31h8M19 34h9M19 37h10" stroke="#9aa0a6" strokeWidth="1" />
      <rect x="63" y="7" width="18" height="18" fill="#b39b74" /><path d="M66 8v16M72 7v9l8 3M63 17h11v7" stroke="#5d4a31" strokeWidth="1.500" fill="none" />
    </svg>
    <svg viewBox="0 0 72 72" className="absolute left-[54px] top-[44px] size-[27px] overflow-hidden rounded-[7px]"><FinderFace /></svg>
  </div>
);
const Trash = () => (
  <svg viewBox="0 0 64 82" className="h-[82px] w-[64px]">
    <defs><linearGradient id="tr" x1="0" y1="0" x2="1" y2="0"><stop offset="0" stopColor="#5c5f62" /><stop offset=".3" stopColor="#86898d" /><stop offset=".6" stopColor="#6a6e72" /><stop offset="1" stopColor="#94989c" /></linearGradient></defs>
    <path d="M4 12l6-6 7 3 5-8 7 6 6-5 6 4 5 3 7-3 5 10-6 6H10z" fill="#dcdcdc" />
    <path d="M12 10l6 7 5-9M27 15l5-9 5 9M42 14l6-8 5 8M8 13l8-1" stroke="#6b6b6b" strokeWidth="1.600" fill="none" />
    <path d="M20 13l5-4 4 4z" fill="#41c6c0" /><path d="M38 12l6-2 2 6-6 1z" fill="#8a4a3a" /><path d="M22 17l6-2 1 3z" fill="#e78b3a" />
    <path d="M1 9c4 8 12 9.500 31 9.500S59 17 63 9l-8 67c-2 7-44 7-46 0z" fill="url(#tr)" fillOpacity=".94" />
    <path d="M1 9c4 8 12 9.500 31 9.500S59 17 63 9" fill="none" stroke="#c9ccce" strokeWidth="1.200" />
  </svg>
);

const dockItems: { icon: ReactNode; dot?: boolean; badge?: string }[][] = [
  [
    { icon: <Finder />, dot: true }, { icon: <Launchpad /> }, { icon: <Messages />, dot: true }, { icon: <Mail /> }, { icon: <Photos /> },
    { icon: <FaceTime /> }, { icon: <Calendar /> }, { icon: <Contacts /> }, { icon: <Reminders /> }, { icon: <Notes />, dot: true },
    { icon: <Freeform /> }, { icon: <Tv /> }, { icon: <Music /> }, { icon: <AppStore />, badge: '4' }, { icon: <Chrome />, dot: true },
    { icon: <Settings />, badge: '2' }, { icon: <Terminal />, dot: true }, { icon: <DiscordTile /> }, { icon: <Unreal /> },
  ],
  [{ icon: <VsCode />, dot: true }, { icon: <TextEdit />, dot: true }, { icon: <QuickTime /> }],
  [{ icon: <MiniWindow /> }, { icon: <Trash /> }],
];

function Dock() {
  return (
    <div className="absolute bottom-[10px] left-[289px] flex h-[110px] w-[2302px] rounded-[40px] border-2 border-[#55534a] bg-linear-to-r from-[#2b2416] from-0% via-[#1d1d17] via-70% to-[#1f211a] to-100% pl-[3px] shadow-[0_0_90px_rgba(0,0,0,0.2),0_0_0_1px_rgba(0,0,0,0.5)]">
      <div className="absolute inset-0 rounded-[38px] bg-[radial-gradient(ellipse_600px_200px_at_30%_50%,#332e16,transparent),radial-gradient(ellipse_330px_200px_at_82%_60%,#43301c,transparent)]" />
      {dockItems.map((group, g) => (
        <div key={g} className="relative flex">
          {g > 0 && <span className="mx-[20px] mt-[12px] h-[82px] w-[2px] bg-[#6b685c]" />}
          {group.map((it, i) => (
            <div key={i} className="relative flex h-[106px] w-[92px] shrink-0 justify-center">
              <div className="flex h-[100px] items-center">{it.icon}</div>
              {it.dot && <span className="absolute bottom-[2px] left-[42px] size-[8px] rounded-full bg-[#aba594]" />}
              {it.badge && <span className="absolute left-[57px] top-[6px] flex size-[34px] items-center justify-center rounded-full bg-[#e04c3e] text-[21px] text-white">{it.badge}</span>}
            </div>
          ))}
        </div>
      ))}
    </div>
  );
}

function Wallpaper() {
  return (
    <svg viewBox="0 0 2880 130" className="absolute inset-x-0 bottom-0 h-[130px] w-[2880px]">
      <defs>
        <filter id="leaves" x="0" y="0" width="100%" height="100%" colorInterpolationFilters="sRGB">
          <feTurbulence type="fractalNoise" baseFrequency="0.025 0.035" numOctaves="5" seed="7" />
          <feColorMatrix values="0.1 0.14 0 0 -0.055  0.06 0.22 0 0 -0.06  0 0.04 0.02 0 -0.01  0 0 0 0 1" />
        </filter>
        <linearGradient id="shade" x1="0" y1="0" x2="0" y2="1"><stop offset="0" stopColor="#000" stopOpacity=".55" /><stop offset="1" stopColor="#000" stopOpacity="0" /></linearGradient>
      </defs>
      <rect width="2880" height="130" filter="url(#leaves)" />
      <ellipse cx="2190" cy="130" rx="90" ry="16" fill="#7a5530" fillOpacity=".45" />
      <ellipse cx="2780" cy="60" rx="130" ry="80" fill="#08090c" fillOpacity=".45" />
      <rect width="2880" height="130" fill="url(#shade)" />
    </svg>
  );
}

export default function App() {
  return (
    <div className="relative flex h-[1800px] w-[2880px] flex-col overflow-hidden bg-[#0c0d05] font-['Inter',sans-serif]">
      <Wallpaper />
      <MenuBar />
      <div className="relative flex h-[1632px] w-full shrink-0 flex-col bg-linear-to-b from-[#cfcdc6] from-0% via-[#cfcdc6] via-50% to-transparent to-50% pt-[2px]">
        <div className="relative flex h-[1628px] w-full flex-col overflow-hidden rounded-[20px] bg-[#f3ae57] shadow-[0_0_0_1px_#000]">
          <TabStrip />
          <div className="flex shrink-0 flex-col rounded-t-[20px] bg-[#fbe0bd]">
            <Toolbar />
            <Bookmarks />
          </div>
          <ChatPage />
          <div className="pointer-events-none absolute inset-0 rounded-[20px] border-2 border-white/20" />
        </div>
      </div>
      <Dock />
    </div>
  );
}
